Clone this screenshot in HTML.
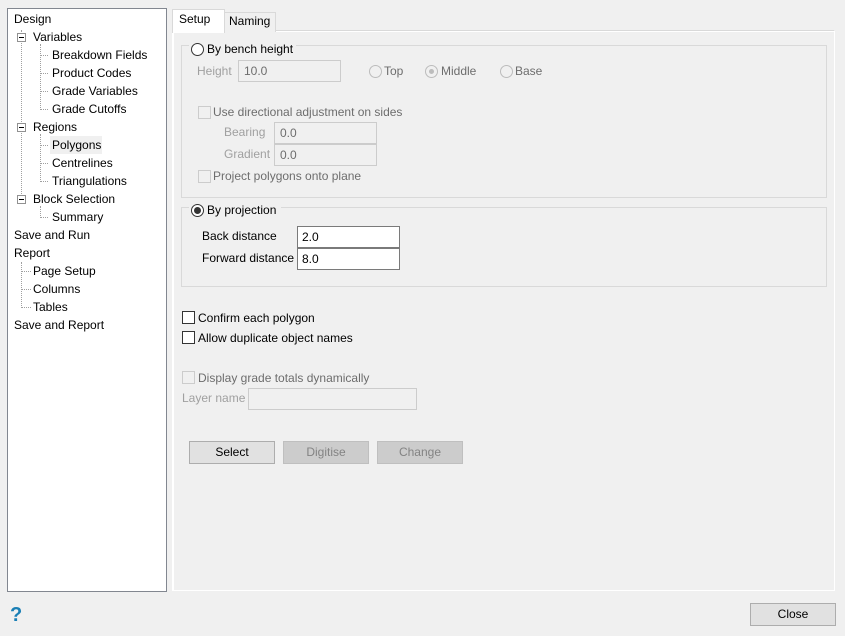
<!DOCTYPE html>
<html><head><style>
body{margin:0;width:845px;height:636px;background:#f0f0f0;font-family:"Liberation Sans",sans-serif;font-size:12px;line-height:16px;color:#000;position:relative;overflow:hidden}
.a{position:absolute;white-space:nowrap}
.tree{left:7px;top:8px;width:158px;height:582px;background:#fff;border:1px solid #828790}
.dis{color:#a0a0a0}
.box{position:absolute;border:1px solid #d9d9d9;box-sizing:border-box}
.inp{position:absolute;border:1px solid #cccccc;background:#f0f0f0;box-sizing:border-box;padding:2px 0 0 5px;color:#6d6d6d}
.inpw{position:absolute;border:1px solid #7a7a7a;background:#fff;box-sizing:border-box;padding:2px 0 0 4px}
.cb{position:absolute;width:13px;height:13px;box-sizing:border-box;border:1px solid #333;background:#fff}
.cbd{border-color:#cccccc;background:#f0f0f0}
.rb{position:absolute;width:13px;height:13px;box-sizing:border-box;border:1px solid #333;border-radius:50%;background:#fff}
.rbd{border-color:#bcbcbc;background:#f0f0f0}
.btn{position:absolute;height:23px;box-sizing:border-box;border:1px solid #adadad;background:#e1e1e1;text-align:center;line-height:21px}
.btnd{border-color:#bfbfbf;background:#cccccc;color:#838383}
.dot{position:absolute;border-left:1px dotted #a0a0a0}
.hd{position:absolute;border-top:1px dotted #a0a0a0;width:7px}
.pm{position:absolute;width:9px;height:9px;box-sizing:border-box;border:1px solid #919191;background:#fff}
.pm::after{content:"";position:absolute;left:1px;top:3px;width:5px;height:1px;background:#000}
</style></head><body>
<div class="a tree"></div>
<div class="dot" style="left:21px;top:30px;height:174px"></div>
<div class="dot" style="left:40px;top:44px;height:66px"></div>
<div class="dot" style="left:40px;top:134px;height:48px"></div>
<div class="dot" style="left:40px;top:206px;height:12px"></div>
<div class="dot" style="left:21px;top:262px;height:46px"></div>
<div class="hd" style="left:41px;top:55px"></div><div class="hd" style="left:41px;top:73px"></div><div class="hd" style="left:41px;top:91px"></div><div class="hd" style="left:41px;top:109px"></div>
<div class="hd" style="left:41px;top:145px"></div><div class="hd" style="left:41px;top:163px"></div><div class="hd" style="left:41px;top:181px"></div><div class="hd" style="left:41px;top:217px"></div>
<div class="hd" style="left:22px;top:271px;width:9px"></div><div class="hd" style="left:22px;top:289px;width:9px"></div><div class="hd" style="left:22px;top:307px;width:9px"></div>
<div class="pm" style="left:17px;top:33px"></div>
<div class="pm" style="left:17px;top:123px"></div>
<div class="pm" style="left:17px;top:195px"></div>
<div class="a" style="left:14px;top:11px">Design</div>
<div class="a" style="left:33px;top:29px">Variables</div>
<div class="a" style="left:52px;top:47px">Breakdown Fields</div>
<div class="a" style="left:52px;top:65px">Product Codes</div>
<div class="a" style="left:52px;top:83px">Grade Variables</div>
<div class="a" style="left:52px;top:101px">Grade Cutoffs</div>
<div class="a" style="left:33px;top:119px">Regions</div>
<div class="a" style="left:50px;top:136px;width:52px;height:18px;background:#f0f0f0"></div>
<div class="a" style="left:52px;top:137px">Polygons</div>
<div class="a" style="left:52px;top:155px">Centrelines</div>
<div class="a" style="left:52px;top:173px">Triangulations</div>
<div class="a" style="left:33px;top:191px">Block Selection</div>
<div class="a" style="left:52px;top:209px">Summary</div>
<div class="a" style="left:14px;top:227px">Save and Run</div>
<div class="a" style="left:14px;top:245px">Report</div>
<div class="a" style="left:33px;top:263px">Page Setup</div>
<div class="a" style="left:33px;top:281px">Columns</div>
<div class="a" style="left:33px;top:299px">Tables</div>
<div class="a" style="left:14px;top:317px">Save and Report</div>

<div class="a" style="left:172px;top:30px;width:661px;height:559px;border:1px solid #fff;border-top-color:#d9d9d9;border-left-color:#fff;background:#f0f0f0;box-shadow:inset 1px 1px 0 #fff"></div>
<div class="a" style="left:223px;top:12px;width:51px;height:19px;border:1px solid #d9d9d9;border-bottom:none;background:#f0f0f0"></div>
<div class="a" style="left:229px;top:13px">Naming</div>
<div class="a" style="left:172px;top:9px;width:51px;height:23px;border:1px solid #d9d9d9;border-bottom:none;background:#fff"></div>
<div class="a" style="left:179px;top:11px">Setup</div>

<div class="box" style="left:181px;top:45px;width:646px;height:153px"></div>
<div class="a" style="left:189px;top:41px;width:107px;height:14px;background:#f0f0f0"></div>
<div class="rb" style="left:191px;top:43px"></div>
<div class="a" style="left:207px;top:41px">By bench height</div>
<div class="a dis" style="left:197px;top:63px">Height</div>
<div class="inp" style="left:238px;top:60px;width:103px;height:22px">10.0</div>
<div class="rb rbd" style="left:369px;top:65px"></div><div class="a" style="left:384px;top:63px;color:#6d6d6d">Top</div>
<div class="rb rbd" style="left:425px;top:65px"></div><div class="a" style="left:429px;top:69px;width:5px;height:5px;border-radius:50%;background:#bcbcbc"></div><div class="a" style="left:441px;top:63px;color:#6d6d6d">Middle</div>
<div class="rb rbd" style="left:500px;top:65px"></div><div class="a" style="left:515px;top:63px;color:#6d6d6d">Base</div>
<div class="cb cbd" style="left:198px;top:106px"></div><div class="a" style="left:213px;top:104px;color:#6d6d6d">Use directional adjustment on sides</div>
<div class="a dis" style="left:224px;top:124px">Bearing</div>
<div class="inp" style="left:274px;top:122px;width:103px;height:22px">0.0</div>
<div class="a dis" style="left:224px;top:146px">Gradient</div>
<div class="inp" style="left:274px;top:144px;width:103px;height:22px">0.0</div>
<div class="cb cbd" style="left:198px;top:170px"></div><div class="a" style="left:213px;top:168px;color:#6d6d6d">Project polygons onto plane</div>

<div class="box" style="left:181px;top:207px;width:646px;height:80px"></div>
<div class="a" style="left:189px;top:203px;width:92px;height:14px;background:#f0f0f0"></div>
<div class="rb" style="left:191px;top:204px"></div><div class="a" style="left:194px;top:207px;width:7px;height:7px;border-radius:50%;background:#333"></div>
<div class="a" style="left:207px;top:202px">By projection</div>
<div class="a" style="left:202px;top:228px">Back distance</div>
<div class="inpw" style="left:297px;top:226px;width:103px;height:22px">2.0</div>
<div class="a" style="left:202px;top:250px">Forward distance</div>
<div class="inpw" style="left:297px;top:248px;width:103px;height:22px">8.0</div>

<div class="cb" style="left:182px;top:311px"></div><div class="a" style="left:198px;top:310px">Confirm each polygon</div>
<div class="cb" style="left:182px;top:331px"></div><div class="a" style="left:198px;top:330px">Allow duplicate object names</div>
<div class="cb cbd" style="left:182px;top:371px"></div><div class="a" style="left:198px;top:370px;color:#6d6d6d">Display grade totals dynamically</div>
<div class="a dis" style="left:182px;top:390px">Layer name</div>
<div class="inp" style="left:248px;top:388px;width:169px;height:22px"></div>

<div class="btn" style="left:189px;top:441px;width:86px">Select</div>
<div class="btn btnd" style="left:283px;top:441px;width:86px">Digitise</div>
<div class="btn btnd" style="left:377px;top:441px;width:86px">Change</div>

<div class="a" style="left:10px;top:604px;font-size:20px;font-weight:bold;color:#1a7fb5;line-height:22px">?</div>
<div class="btn" style="left:750px;top:603px;width:86px">Close</div>
</body></html>
